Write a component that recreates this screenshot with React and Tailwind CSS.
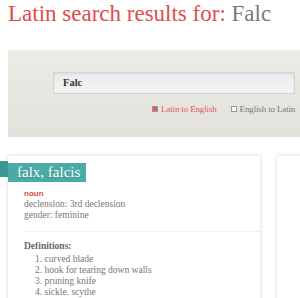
const DEFS = ['curved blade', 'hook for tearing down walls', 'pruning knife', 'sickle. scythe']

export default function App() {
  return (
    <div className="w-[300px] h-[298px] overflow-hidden bg-white font-['Liberation_Serif',serif]">
      <div className="pl-2 w-[340px]">
        <h1 className="text-[23px] leading-[26px] pt-[1px] text-[#e24b4b] whitespace-nowrap">
          Latin search results for: <span className="text-[#7a7a7a]">Falc</span>
        </h1>

        {/* search panel */}
        <div className="mt-[23px] h-[87px] bg-gradient-to-b from-[#ecebe6] to-[#e2e1dc] pl-[45px] pt-[22px]">
          <div className="w-[242px] h-[22px] border border-[#dccfcf] bg-gradient-to-b from-[#ececef] to-[#f4f4f6] shadow-[inset_0_1px_3px_rgba(0,0,0,0.08)] pl-[9px] flex items-center text-[10.5px] font-bold text-[#333]">
            Falc
          </div>
          <div className="mt-[9px] ml-[99px] flex items-center whitespace-nowrap text-[9px] leading-[12px] tracking-[-0.15px]">
            <span className="w-[6px] h-[6px] border border-[#999] bg-[#e25a5a] mr-[3px]" />
            <span className="text-[#e25a5a]">Latin to English</span>
            <span className="w-[6px] h-[6px] border border-[#999] bg-white ml-[14px] mr-[3px]" />
            <span className="text-[#777]">English to Latin</span>
          </div>
        </div>

        {/* results */}
        <div className="mt-[19px] flex gap-[17px]">
          <div className="relative w-[269px] h-[160px] bg-white shadow-[0_0_4px_rgba(0,0,0,0.18)] pt-[33px] pl-[16px]">
            <div className="absolute left-[-8px] top-[5px] w-[8px] h-[16px] bg-[#3c9895]" />
            <div className="absolute left-0 top-[7px] w-[78px] h-[19px] bg-[#4aaaa6] text-white text-[15px] leading-[19px] pl-[9px] whitespace-nowrap [text-shadow:0_1px_1px_rgba(0,0,0,0.15)]">
              falx, falcis
            </div>
            <div className="text-[8px] leading-[10px] font-bold text-[#e24b4b] font-['Liberation_Sans',sans-serif]">noun</div>
            <div className="text-[9.5px] leading-[11px] text-[#777]">declension: 3rd declension</div>
            <div className="text-[9.5px] leading-[11px] text-[#777]">gender: feminine</div>
            <div className="mt-[10px] w-[236px] border-t border-[#f0f0f0]" />
            <div className="mt-[9px] text-[9.5px] leading-[11px] font-bold text-[#666]">Definitions:</div>
            <ol className="mt-[2px] ml-[11px] text-[9.5px] leading-[11px] text-[#777]">
              {DEFS.map((d, i) => (
                <li key={d}>{i + 1}. {d}</li>
              ))}
            </ol>
          </div>
          <div className="w-[269px] h-[160px] bg-white shadow-[0_0_4px_rgba(0,0,0,0.18)]" />
        </div>
      </div>
    </div>
  )
}
